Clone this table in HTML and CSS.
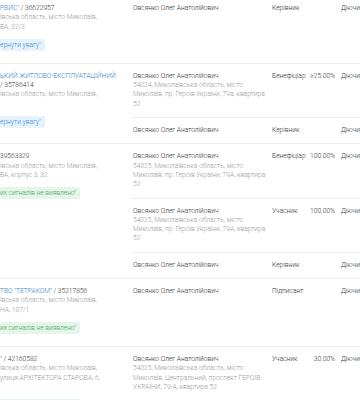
FILE: index.html
```html
<!DOCTYPE html>
<html lang="uk">
<head>
<meta charset="utf-8">
<link rel="stylesheet" href="styles.css">
</head>
<body>
<div class="table">

  <div class="row">
    <div class="org">
      <div class="line"><span class="link">РВИС"</span> / 36622957</div>
      <div class="line addr">ївська область, місто Миколаїв,</div>
      <div class="line addr">ВА, 32/3</div>
      <span class="badge warn">ернути увагу"</span>
    </div>
    <div class="people">
      <div class="sub">
        <div class="person"><div class="name">Овсянко Олег Анатолійович</div></div>
        <div class="role">Керівник</div>
        <div class="pct"></div>
        <div class="status">Діючий</div>
      </div>
    </div>
  </div>

  <div class="row">
    <div class="org">
      <div class="line link">ЬКИЙ ЖИТЛОВО-ЕКСПЛУАТАЦІЙНИЙ</div>
      <div class="line">/ 35786414</div>
      <div class="line addr">ївська область, місто Миколаїв,</div>
      <div class="line addr">&nbsp;</div>
      <span class="badge warn">ернути увагу"</span>
    </div>
    <div class="people">
      <div class="sub">
        <div class="person">
          <div class="name">Овсянко Олег Анатолійович</div>
          <div class="addr">54024, Миколаївська область, місто<br>Миколаїв, пр. Героїв України, 79а, квартира<br>52</div>
        </div>
        <div class="role">Бенефіціар</div>
        <div class="pct">≥25.00%</div>
        <div class="status">Діючий</div>
      </div>
      <div class="sub">
        <div class="person"><div class="name">Овсянко Олег Анатолійович</div></div>
        <div class="role">Керівник</div>
        <div class="pct"></div>
        <div class="status">Діючий</div>
      </div>
    </div>
  </div>

  <div class="row">
    <div class="org">
      <div class="line">39563329</div>
      <div class="line addr">ївська область, місто Миколаїв,</div>
      <div class="line addr">ВА, корпус 3, 32</div>
      <span class="badge ok">их сигналів не виявлено"</span>
    </div>
    <div class="people">
      <div class="sub">
        <div class="person">
          <div class="name">Овсянко Олег Анатолійович</div>
          <div class="addr">54025, Миколаївська область, місто<br>Миколаїв, пр. Героїв України, 79А, квартира<br>52</div>
        </div>
        <div class="role">Бенефіціар</div>
        <div class="pct">100.00%</div>
        <div class="status">Діючий</div>
      </div>
      <div class="sub">
        <div class="person">
          <div class="name">Овсянко Олег Анатолійович</div>
          <div class="addr">54025, Миколаївська область, місто<br>Миколаїв, пр. Героїв України, 79А, квартира<br>52</div>
        </div>
        <div class="role">Учасник</div>
        <div class="pct">100.00%</div>
        <div class="status">Діючий</div>
      </div>
      <div class="sub">
        <div class="person"><div class="name">Овсянко Олег Анатолійович</div></div>
        <div class="role">Керівник</div>
        <div class="pct"></div>
        <div class="status">Діючий</div>
      </div>
    </div>
  </div>

  <div class="row">
    <div class="org">
      <div class="line"><span class="link">ТВО "ТЕТРАКОМ"</span> / 35217856</div>
      <div class="line addr">ївська область, місто Миколаїв,</div>
      <div class="line addr">НА, 107/1</div>
      <span class="badge ok">их сигналів не виявлено"</span>
    </div>
    <div class="people">
      <div class="sub">
        <div class="person"><div class="name">Овсянко Олег Анатолійович</div></div>
        <div class="role">Підписант</div>
        <div class="pct"></div>
        <div class="status">Діючий</div>
      </div>
    </div>
  </div>

  <div class="row">
    <div class="org">
      <div class="line"><span class="link">"</span> / 42160582</div>
      <div class="line addr">ївська область, місто Миколаїв,</div>
      <div class="line addr">улиця АРХІТЕКТОРА СТАРОВА, 6,</div>
      <div class="line addr">&nbsp;</div>
      <span class="badge ok">их сигналів не виявлено"</span>
    </div>
    <div class="people">
      <div class="sub">
        <div class="person">
          <div class="name">Овсянко Олег Анатолійович</div>
          <div class="addr">54025, Миколаївська область, місто<br>Миколаїв, Центральний, проспект ГЕРОЇВ<br>УКРАЇНИ, 79-А, квартира 52</div>
        </div>
        <div class="role">Учасник</div>
        <div class="pct">30.00%</div>
        <div class="status">Діючий</div>
      </div>
    </div>
  </div>

</div>
</body>
</html>
```

FILE: styles.css
```css
html, body {
  margin: 0;
  padding: 0;
  background: #ffffff;
}

body {
  width: 360px;
  height: 400px;
  overflow: hidden;
  font-family: Roboto, "Liberation Sans", sans-serif;
  font-weight: 300;
  font-size: 6.65px;
  line-height: 9.3px;
  color: #333333;
}

.table {
  margin-top: -4px;
}

.row {
  display: grid;
  grid-template-columns: 132px 1fr;
  border-bottom: 1px solid #ececec;
}

.org {
  padding: 8px 0 12px 0;
  overflow: hidden;
}

.line {
  white-space: nowrap;
}

.link {
  color: #3584c4;
}

.addr {
  color: #999999;
}

.badge {
  display: inline-block;
  margin-top: 7px;
  height: 12px;
  line-height: 12px;
  padding: 0 4px 0 0;
  border-radius: 2px;
  white-space: nowrap;
}

.badge.warn {
  background: #e7f3fc;
  color: #3a8ccc;
}

.badge.ok {
  background: #e5f6e9;
  color: #3ea35c;
}

.people {
  display: flex;
  flex-direction: column;
}

.sub {
  display: grid;
  grid-template-columns: 140px 37px 26px 1fr;
  padding: 8px 0;
}

.sub + .sub {
  border-top: 1px solid #ececec;
}

.person {
  padding-left: 1px;
}

.person .addr {
  white-space: nowrap;
}

.role,
.pct,
.status {
  white-space: nowrap;
}

.pct {
  text-align: right;
}

.status {
  padding-left: 6px;
}
```
